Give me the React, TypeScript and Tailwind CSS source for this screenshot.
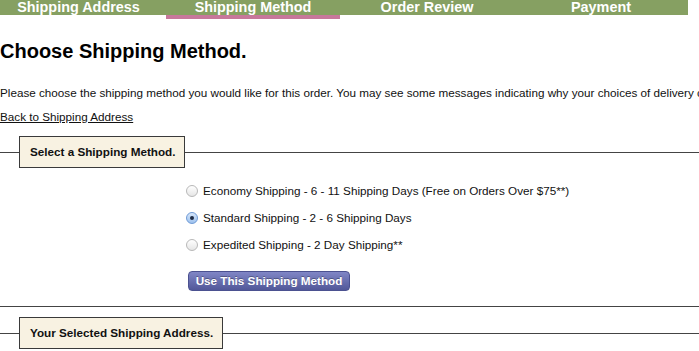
const tabs = [
  { label: 'Shipping Address', w: 'w-[166px] pr-[9px]', active: false },
  { label: 'Shipping Method', w: 'w-[174px]', active: true },
  { label: 'Order Review', w: 'w-[174px]', active: false },
  { label: 'Payment', w: 'w-[174px]', active: false },
];

const methods = [
  { id: 'economy', label: 'Economy Shipping - 6 - 11 Shipping Days (Free on Orders Over $75**)' },
  { id: 'standard', label: 'Standard Shipping - 2 - 6 Shipping Days' },
  { id: 'expedited', label: 'Expedited Shipping - 2 Day Shipping**' },
];

function Radio({ checked }: { checked: boolean }) {
  if (checked) {
    return (
      <span className="flex h-[12px] w-[12px] shrink-0 items-center justify-center rounded-full border border-[#6f9ad6] bg-gradient-to-b from-[#d6e6fa] to-[#9ec2ee]">
        <span className="h-[4px] w-[4px] rounded-full bg-[#1d2b45]" />
      </span>
    );
  }
  return (
    <span className="h-[12px] w-[12px] shrink-0 rounded-full border border-[#b8b8b8] bg-gradient-to-b from-white to-[#e6e6e6]" />
  );
}

function Legend({ children }: { children: React.ReactNode }) {
  return (
    <legend className="ml-[19px] h-[32px] border border-[#3a3a3a] bg-[#f8f2e2] pl-[10px] pr-[9px] text-[11.7px] leading-[30px] font-bold text-[#111]">
      {children}
    </legend>
  );
}

export default function App() {
  return (
    <div className="h-[351px] w-[699px] overflow-hidden bg-white font-['Liberation_Sans',Arial,sans-serif] text-[#111]">
      <nav className="flex items-start">
        {tabs.map((t) => (
          <div
            key={t.label}
            className={`${t.w} shrink-0 bg-[#86a062] text-center text-[14.4px] leading-[15px] font-bold text-white ${
              t.active ? 'box-content h-[15px] border-b-4 border-[#c7789b]' : 'h-[15px]'
            }`}
          >
            {t.label}
          </div>
        ))}
      </nav>

      <h1 className="mt-[20px] text-[20px] leading-[24px] font-bold text-black">
        Choose Shipping Method.
      </h1>

      <p className="mt-[22px] whitespace-nowrap text-[11.7px] leading-[16px]">
        Please choose the shipping method you would like for this order. You may see some messages
        indicating why your choices of delivery carriers are limited.
      </p>

      <a href="#" className="mt-[8px] block w-max text-[11.7px] leading-[16px] text-[#111] underline">
        Back to Shipping Address
      </a>

      <fieldset className="mt-[11px] border-x-0 border-t border-b border-[#444] pb-[14px]">
        <Legend>Select a Shipping Method.</Legend>
        <div className="pt-[9px] pl-[186px]">
          {methods.map((m) => (
            <label key={m.id} className="flex h-[27px] items-center gap-[5px] text-[11.7px] whitespace-nowrap">
              <Radio checked={m.id === 'standard'} />
              <span>{m.label}</span>
            </label>
          ))}
          <button className="mt-[13px] ml-[2px] h-[20px] w-[162px] rounded-[4px] border border-[#4b5190] bg-gradient-to-b from-[#8086c6] to-[#525899] text-[11.7px] font-bold text-white [text-shadow:0_-1px_0_rgba(0,0,0,0.3)]">
            Use This Shipping Method
          </button>
        </div>
      </fieldset>

      <fieldset className="mt-[10px] border-x-0 border-t border-b border-[#444] pb-[40px]">
        <Legend>Your Selected Shipping Address.</Legend>
        <div className="h-[40px]" />
      </fieldset>
    </div>
  );
}
